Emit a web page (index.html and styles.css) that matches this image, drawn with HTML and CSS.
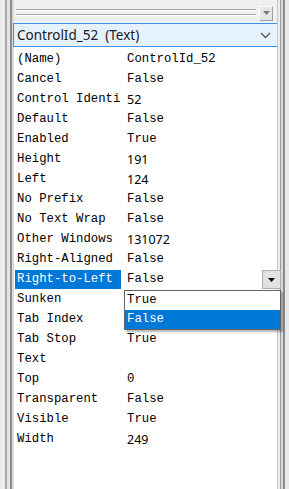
FILE: index.html
```html
<!DOCTYPE html>
<html lang="en">
<head>
  <meta charset="UTF-8">
  <title>Properties</title>
  <link rel="stylesheet" href="styles.css">
</head>
<body>
  <div class="window">
    <div class="rail-left"></div>
    <div class="panel">
      <div class="toolbar">
        <div class="gripper"></div>
        <div class="tool-btn">
          <svg width="7" height="4" viewBox="0 0 7 4"><path d="M0 0H7L3.5 4Z" fill="#7a7a7a"/></svg>
        </div>
      </div>
      <div class="combo">
        <span>ControlId_52&nbsp; (Text)</span>
        <svg class="chev" width="11" height="7" viewBox="0 0 11 7"><path d="M1 1L5.5 5.5L10 1" fill="none" stroke="#555" stroke-width="1.3"/></svg>
      </div>
      <div class="props">
        <div class="row"><span class="key">(Name)</span><span class="val">ControlId_52</span></div>
        <div class="row"><span class="key">Cancel</span><span class="val">False</span></div>
        <div class="row"><span class="key">Control Identi</span><span class="val num">52</span></div>
        <div class="row"><span class="key">Default</span><span class="val">False</span></div>
        <div class="row"><span class="key">Enabled</span><span class="val">True</span></div>
        <div class="row"><span class="key">Height</span><span class="val num">191</span></div>
        <div class="row"><span class="key">Left</span><span class="val num">124</span></div>
        <div class="row"><span class="key">No Prefix</span><span class="val">False</span></div>
        <div class="row"><span class="key">No Text Wrap</span><span class="val">False</span></div>
        <div class="row"><span class="key">Other Windows</span><span class="val num">131072</span></div>
        <div class="row"><span class="key">Right-Aligned</span><span class="val">False</span></div>
        <div class="row editing">
          <span class="key selected">Right-to-Left</span><span class="val">False</span>
          <div class="drop-btn">
            <svg width="7" height="4" viewBox="0 0 7 4"><path d="M0 0H7L3.5 4Z" fill="#000"/></svg>
          </div>
          <div class="drop-list">
            <div class="opt">True</div>
            <div class="opt active">False</div>
          </div>
        </div>
        <div class="row"><span class="key">Sunken</span><span class="val"></span></div>
        <div class="row"><span class="key">Tab Index</span><span class="val"></span></div>
        <div class="row"><span class="key">Tab Stop</span><span class="val">True</span></div>
        <div class="row"><span class="key">Text</span><span class="val"></span></div>
        <div class="row"><span class="key">Top</span><span class="val">0</span></div>
        <div class="row"><span class="key">Transparent</span><span class="val">False</span></div>
        <div class="row"><span class="key">Visible</span><span class="val">True</span></div>
        <div class="row"><span class="key">Width</span><span class="val num">249</span></div>
      </div>
    </div>
    <div class="rail-right"></div>
  </div>
</body>
</html>
```

FILE: styles.css
```css
body {
  margin: 0;
  background: #f0f0f0;
}

.window {
  display: flex;
  width: 289px;
  height: 489px;
  overflow: hidden;
  background: #f0f0f0;
}

.rail-left {
  width: 14px;
  background: linear-gradient(to right,
    #ececec 0, #ececec 5px,
    #a8a8a8 5px, #a8a8a8 7px,
    #e4e4e4 7px, #e4e4e4 10px,
    #8c8c8c 10px, #8c8c8c 12px,
    #dadada 12px, #dadada 14px);
}

.rail-right {
  width: 12px;
  background: linear-gradient(to right,
    #c8c8c8 0, #c8c8c8 1px,
    #ececec 1px, #ececec 3px,
    #9a9a9a 3px, #9a9a9a 4px,
    #d8d8d8 4px, #d8d8d8 6px,
    #8c8c8c 6px, #8c8c8c 8px,
    #e8e8e8 8px, #e8e8e8 12px);
}

.panel {
  flex: 1;
  display: flex;
  flex-direction: column;
  background: #fff;
}

.toolbar {
  height: 23px;
  display: flex;
  align-items: center;
  gap: 3px;
  padding: 0 4px 0 2px;
  background: #f0f0f0;
}

.gripper {
  flex: 1;
  height: 7px;
  margin-top: 2px;
  background: linear-gradient(to bottom,
    #a8a8a8 0, #a8a8a8 1px,
    #fff 1px, #fff 2px,
    transparent 2px, transparent 5px,
    #a8a8a8 5px, #a8a8a8 6px,
    #fff 6px, #fff 7px);
}

.tool-btn {
  width: 12px;
  height: 13px;
  margin-top: 3px;
  border: 1px solid #fff;
  border-right-color: #a0a0a0;
  border-bottom-color: #a0a0a0;
  background: #e6e6e6;
  display: flex;
  align-items: center;
  justify-content: center;
}

.combo {
  height: 22px;
  margin-left: -1px;
  margin-right: -3px;
  border: 1px solid #3c94e4;
  background: #e5f1fb;
  display: flex;
  align-items: center;
  padding: 0 8px 0 3px;
  font-family: "Noto Sans", "Open Sans", sans-serif;
  font-size: 13.5px;
  color: #1a1a1a;
}

.combo span {
  flex: 1;
}

.props {
  flex: 1;
  padding-top: 2px;
  font-family: "Liberation Mono", "DejaVu Sans Mono", monospace;
  font-size: 12.3px;
  color: #000;
}

.row {
  position: relative;
  height: 20px;
  display: flex;
  align-items: center;
}

.key {
  width: 104px;
  padding-left: 2px;
  margin-left: 1px;
  height: 19px;
  line-height: 19px;
  white-space: nowrap;
  overflow: hidden;
}

.key.selected {
  background: #0078d7;
  color: #fff;
}

.val {
  padding-left: 6px;
}

.num {
  font-family: "Noto Sans", "Open Sans", sans-serif;
  font-size: 12.5px;
}

.drop-btn {
  position: absolute;
  right: -4px;
  top: 1px;
  width: 17px;
  height: 17px;
  border: 1px solid #adadad;
  background: #e1e1e1;
  display: flex;
  align-items: center;
  justify-content: center;
}

.drop-list {
  position: absolute;
  left: 110px;
  right: -4px;
  top: 21px;
  border: 1px solid #646464;
  background: #fff;
  box-shadow: 2px 2px 2px rgba(0, 0, 0, 0.3);
  z-index: 2;
}

.opt {
  height: 19px;
  line-height: 19px;
  padding-left: 2px;
}

.opt.active {
  background: #0078d7;
  color: #fff;
}
```
